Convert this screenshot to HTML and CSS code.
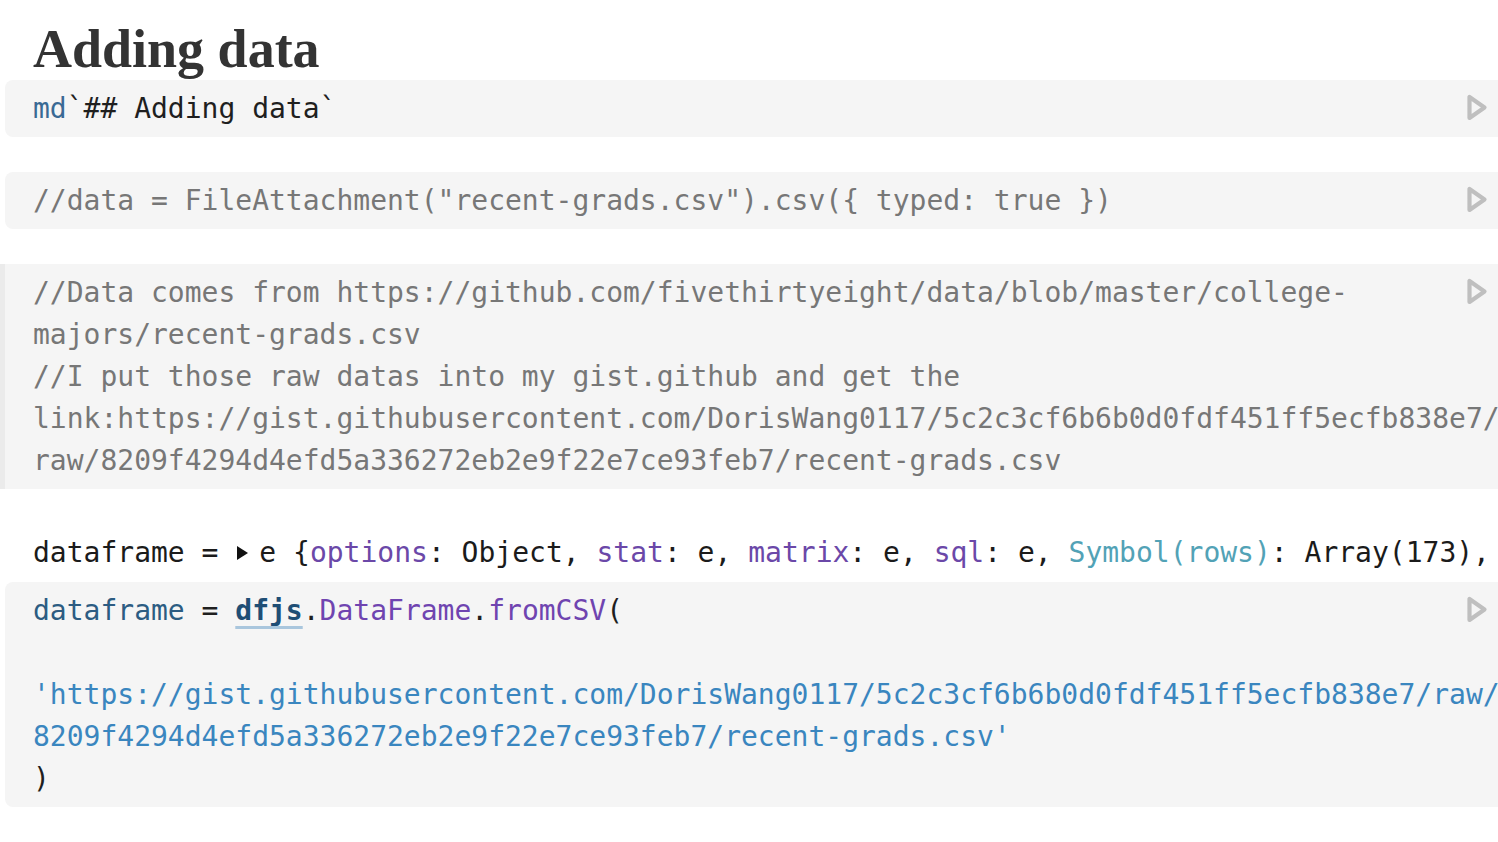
FILE: index.html
```html
<!DOCTYPE html>
<html>
<head>
<meta charset="utf-8">
<link rel="stylesheet" href="styles.css">
</head>
<body>
<div class="notebook">
  <h1 class="title">Adding data</h1>

  <div class="cell">
    <div class="code"><span class="tk-def">md</span>`## Adding data`</div>
    <svg class="run" viewBox="0 0 22 29"><path d="M3.5 4 L3.5 25 L18.5 14.5 Z"/></svg>
  </div>

  <div class="cell gap">
    <div class="code"><span class="tk-comment">//data = FileAttachment("recent-grads.csv").csv({ typed: true })</span></div>
    <svg class="run" viewBox="0 0 22 29"><path d="M3.5 4 L3.5 25 L18.5 14.5 Z"/></svg>
  </div>

  <div class="cell gap focused">
    <div class="code"><span class="tk-comment">//Data comes from https://github.com/fivethirtyeight/data/blob/master/college-
majors/recent-grads.csv
//I put those raw datas into my gist.github and get the
link:https://gist.githubusercontent.com/DorisWang0117/5c2c3cf6b6b0d0fdf451ff5ecfb838e7/
raw/8209f4294d4efd5a336272eb2e9f22e7ce93feb7/recent-grads.csv</span></div>
    <svg class="run" viewBox="0 0 22 29"><path d="M3.5 4 L3.5 25 L18.5 14.5 Z"/></svg>
  </div>

  <div class="output gap">dataframe = <svg class="caret" viewBox="0 0 23 20"><path d="M2 3 L13 10 L2 17 Z"/></svg>e {<span class="tk-key">options</span>: Object, <span class="tk-key">stat</span>: e, <span class="tk-key">matrix</span>: e, <span class="tk-key">sql</span>: e, <span class="tk-sym">Symbol(rows)</span>: Array(173),</div>

  <div class="cell">
    <div class="code"><span class="tk-var">dataframe</span> = <span class="tk-ref">dfjs</span>.<span class="tk-prop">DataFrame</span>.<span class="tk-prop">fromCSV</span>(

<span class="tk-str">'https://gist.githubusercontent.com/DorisWang0117/5c2c3cf6b6b0d0fdf451ff5ecfb838e7/raw/
8209f4294d4efd5a336272eb2e9f22e7ce93feb7/recent-grads.csv'</span>
)</div>
    <svg class="run" viewBox="0 0 22 29"><path d="M3.5 4 L3.5 25 L18.5 14.5 Z"/></svg>
  </div>
</div>
</body>
</html>
```

FILE: styles.css
```css
html, body {
  margin: 0;
  padding: 0;
  background: #ffffff;
  overflow: hidden;
}

.notebook {
  padding-left: 5px;
  width: 1493px;
}

.title {
  font-family: "Liberation Serif", "Times New Roman", serif;
  font-weight: 700;
  font-size: 54px;
  line-height: 60px;
  color: #333333;
  margin: 19px 0 1px 0;
  padding-left: 28px;
}

.cell {
  position: relative;
  background: #f5f5f5;
  border-radius: 8px 0 0 8px;
  padding: 8px 0 7px 28px;
  overflow: hidden;
}

.gap {
  margin-top: 35px;
}

.cell.focused {
  border-radius: 0;
  border-left: 5px solid #ebebeb;
  margin-left: -5px;
}

.code {
  font-family: "DejaVu Sans Mono", monospace;
  font-size: 28px;
  line-height: 42px;
  color: #1f1f1f;
  white-space: pre;
}

.run {
  position: absolute;
  top: 13px;
  right: 10px;
  width: 22px;
  height: 29px;
}

.run path {
  fill: none;
  stroke: #bfbfbf;
  stroke-width: 4.2;
  stroke-linejoin: round;
}

.output {
  font-family: "DejaVu Sans Mono", monospace;
  font-size: 28px;
  line-height: 42px;
  color: #1b1b1b;
  white-space: pre;
  overflow: hidden;
  padding: 8px 0 8px 28px;
}

.caret {
  display: inline-block;
  width: 23px;
  height: 20px;
  vertical-align: -1px;
  margin-right: 1px;
}

.caret path {
  fill: #111111;
}

.tk-comment { color: #777777; }
.tk-def { color: #3a6a94; }
.tk-var { color: #2c5c82; }
.tk-ref {
  color: #1f4e75;
  font-weight: 700;
  text-decoration: underline;
  text-decoration-color: #a9c6dd;
  text-decoration-thickness: 3px;
  text-underline-offset: 6px;
}
.tk-prop { color: #6f44b0; }
.tk-str { color: #3a86bf; }
.tk-key { color: #6b48a8; }
.tk-sym { color: #52a2b6; }
```
